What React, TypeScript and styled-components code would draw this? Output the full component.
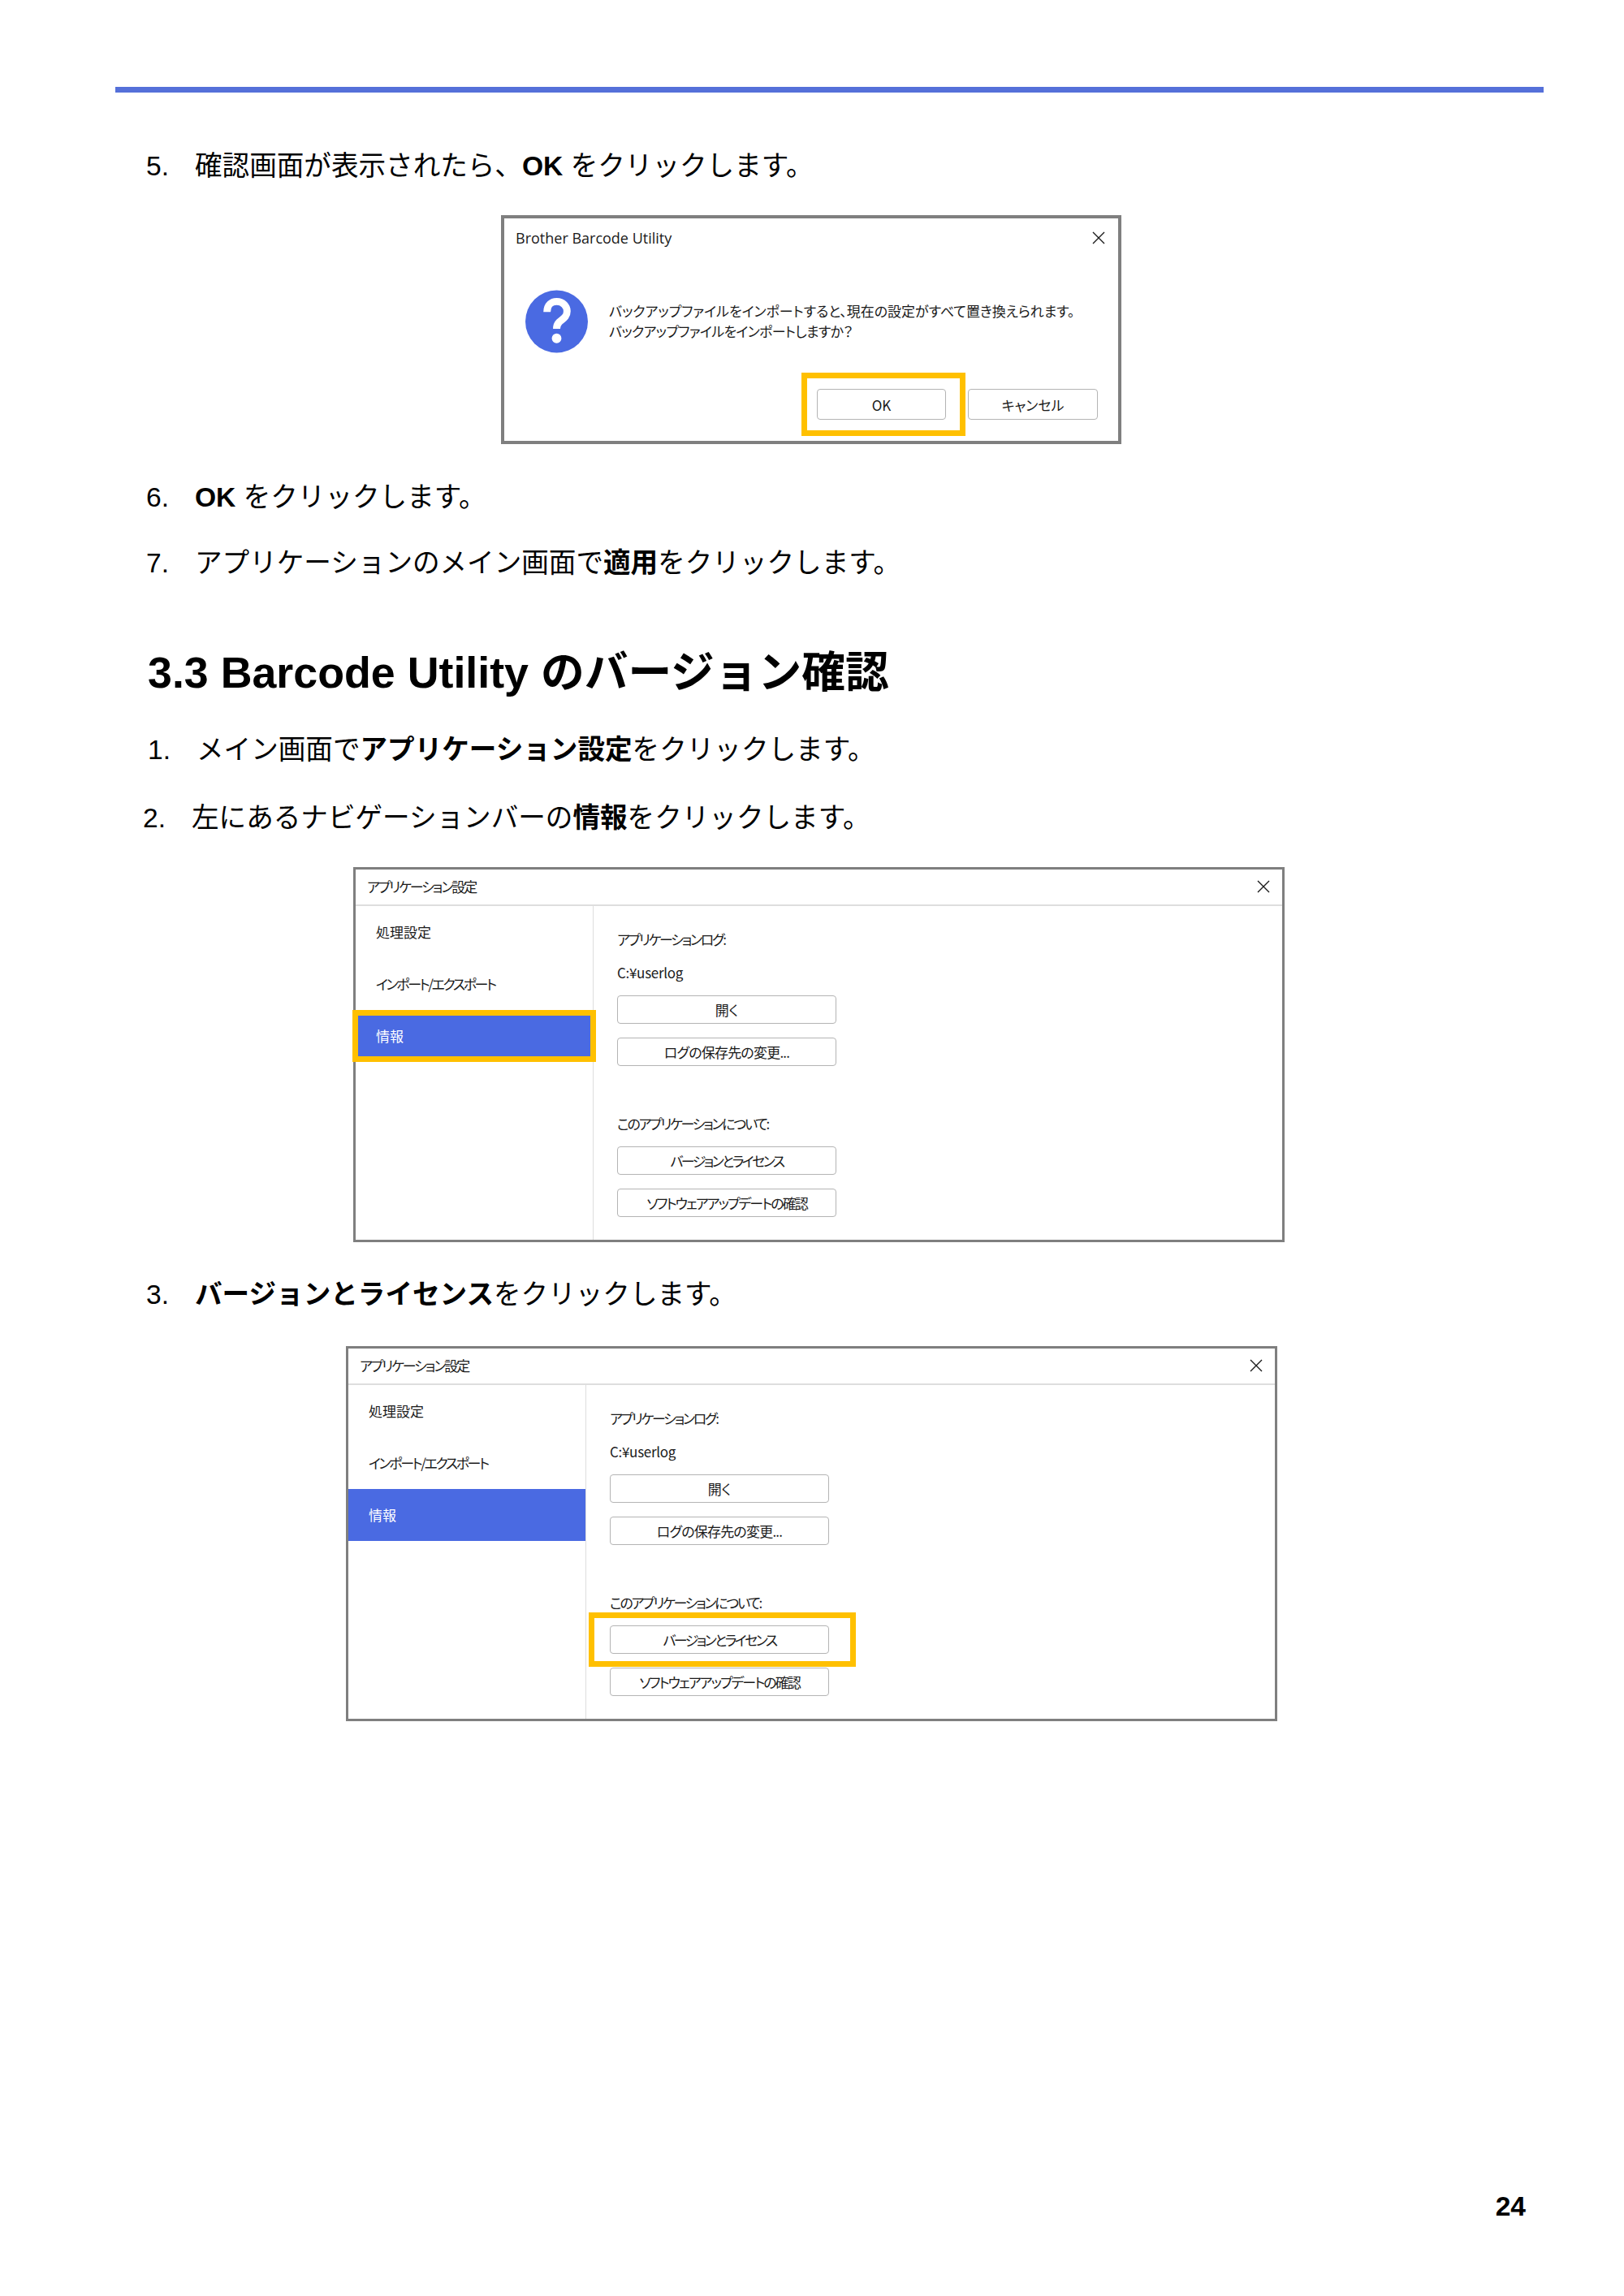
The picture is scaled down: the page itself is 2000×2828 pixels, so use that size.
import React from "react";
import styled, { createGlobalStyle } from "styled-components";

const Global = createGlobalStyle`
  html, body { margin: 0; padding: 0; background: #fff; }
  body { font-family: "Liberation Sans", "Noto Sans CJK JP", sans-serif; color: #000; }
`;

const Page = styled.div`
  width: 2000px;
  height: 2828px;
  display: flex;
  flex-direction: column;
  box-sizing: border-box;
  padding: 107px 0 90px;
  overflow: hidden;
`;

const TopBar = styled.div`
  height: 7px;
  width: 1759px;
  margin-left: 142px;
  background: #5570d9;
`;

const Step = styled.div<{ $left: number; $top: number }>`
  display: grid;
  grid-template-columns: 60px auto;
  margin-left: ${(p) => p.$left}px;
  margin-top: ${(p) => p.$top}px;
  font-size: 33.6px;
  line-height: 40px;
  white-space: nowrap;
`;

const Heading = styled.h2`
  margin: 84px 0 0 182px;
  font-size: 53.76px;
  line-height: 60px;
  font-weight: 700;
  white-space: nowrap;
`;

const Dialog = styled.div<{
  $left: number;
  $top: number;
  $width: number;
  $height: number;
  $border: number;
}>`
  box-sizing: border-box;
  margin-left: ${(p) => p.$left}px;
  margin-top: ${(p) => p.$top}px;
  width: ${(p) => p.$width}px;
  height: ${(p) => p.$height}px;
  border: ${(p) => p.$border}px solid #7f7f7f;
  background: #fff;
  display: flex;
  flex-direction: column;
  font-family: "Noto Sans CJK JP", "Open Sans", sans-serif;
  font-feature-settings: "palt";
  font-size: 17px;
  color: #1a1a1a;
`;

const ConfirmHeader = styled.div`
  display: flex;
  justify-content: space-between;
  align-items: center;
  height: 47px;
  padding: 0 16px 0 14px;
`;

const ConfirmTitle = styled.span`
  font-family: "Open Sans", sans-serif;
  font-size: 18px;
`;

const CloseIcon = () => (
  <svg width="16" height="16" viewBox="0 0 16 16" aria-hidden="true">
    <path d="M1 1 L15 15 M15 1 L1 15" stroke="#1a1a1a" strokeWidth="1.4" fill="none" />
  </svg>
);

const ConfirmBody = styled.div`
  display: flex;
  align-items: center;
  gap: 26px;
  padding: 41px 0 0 26px;
`;

const QuestionIcon = () => (
  <svg width="77" height="78" viewBox="0 0 78 78" aria-hidden="true">
    <circle cx="39" cy="39" r="39" fill="#4a6ae2" />
    <path
      d="M27 27 C27 18 33 14 39 14 C47 14 52 20 52 26 C52 34 46 36 42 40 C40 42 39 44 39 48"
      stroke="#fff"
      strokeWidth="9"
      fill="none"
    />
    <circle cx="39" cy="60" r="6" fill="#fff" />
  </svg>
);

const Message = styled.p`
  margin: 0 0 3px;
  font-size: 17px;
  line-height: 25px;
  white-space: nowrap;
`;

const MessageLine = styled.span<{ $track: number }>`
  display: block;
  letter-spacing: ${(p) => p.$track}px;
`;

const ConfirmActions = styled.div`
  display: flex;
  justify-content: flex-end;
  gap: 27px;
  padding: 44px 25px 0 0;
`;

const Button = styled.div<{ $width?: number; $height?: number; $top?: number; $track?: number }>`
  position: relative;
  box-sizing: border-box;
  width: ${(p) => p.$width ?? 270}px;
  height: ${(p) => p.$height ?? 35}px;
  margin-top: ${(p) => p.$top ?? 0}px;
  border: 1.5px solid #b4b4b4;
  border-radius: 4px;
  background: #fff;
  display: flex;
  align-items: center;
  justify-content: center;
  font-size: 17px;
  letter-spacing: ${(p) => p.$track ?? 0}px;
  white-space: nowrap;
`;

const Highlight = styled.div<{ $t: number; $r: number; $b: number; $l: number }>`
  position: absolute;
  top: ${(p) => p.$t}px;
  right: ${(p) => p.$r}px;
  bottom: ${(p) => p.$b}px;
  left: ${(p) => p.$l}px;
  border: 7.5px solid #ffc000;
  pointer-events: none;
`;

const SettingsHeader = styled.div`
  display: flex;
  justify-content: space-between;
  align-items: center;
  box-sizing: border-box;
  height: 45px;
  padding: 0 15px 2px 14px;
  border-bottom: 2px solid #dedede;
  flex-shrink: 0;
`;

const SettingsTitle = styled.span`
  letter-spacing: -2.1px;
`;

const SettingsBody = styled.div`
  display: flex;
  flex: 1;
  min-height: 0;
`;

const Sidebar = styled.nav`
  width: 293px;
  flex-shrink: 0;
  border-right: 1px solid #dedede;
  box-sizing: border-box;
`;

const NavItem = styled.div<{ $active?: boolean; $track?: number }>`
  position: relative;
  box-sizing: border-box;
  height: 64px;
  display: flex;
  align-items: center;
  padding: 0 0 2px 25px;
  background: ${(p) => (p.$active ? "#4a6ae2" : "transparent")};
  color: ${(p) => (p.$active ? "#fff" : "#1a1a1a")};
  letter-spacing: ${(p) => p.$track ?? 0}px;
  white-space: nowrap;
`;

const Panel = styled.div`
  padding: 29px 0 0 29px;
  display: flex;
  flex-direction: column;
  align-items: flex-start;
`;

const Label = styled.div<{ $top?: number; $track?: number }>`
  height: 24px;
  line-height: 24px;
  margin-top: ${(p) => p.$top ?? 0}px;
  letter-spacing: ${(p) => p.$track ?? 0}px;
  white-space: nowrap;
`;

const PageNumber = styled.div`
  margin-top: auto;
  align-self: flex-end;
  margin-right: 121px;
  font-size: 33.6px;
  line-height: 40px;
  font-weight: 700;
`;

type SettingsProps = {
  left: number;
  top: number;
  navHighlight?: boolean;
  buttonHighlight?: boolean;
};

const SettingsDialog = ({ left, top, navHighlight, buttonHighlight }: SettingsProps) => (
  <Dialog $left={left} $top={top} $width={1147} $height={462} $border={3}>
    <SettingsHeader>
      <SettingsTitle>アプリケーション設定</SettingsTitle>
      <CloseIcon />
    </SettingsHeader>
    <SettingsBody>
      <Sidebar>
        <NavItem>処理設定</NavItem>
        <NavItem $track={-2.4}>インポート/エクスポート</NavItem>
        <NavItem $active>
          情報
          {navHighlight && <Highlight $t={0} $r={-4} $b={0} $l={-4} />}
        </NavItem>
      </Sidebar>
      <Panel>
        <Label $track={-2.3}>アプリケーションログ:</Label>
        <Label $top={17} $track={-0.3}>
          C:¥userlog
        </Label>
        <Button $top={16}>開く</Button>
        <Button $top={17} $track={-0.8}>
          ログの保存先の変更...
        </Button>
        <Label $top={59} $track={-2.3}>
          このアプリケーションについて:
        </Label>
        <Button $top={16} $track={-2.6}>
          バージョンとライセンス
          {buttonHighlight && <Highlight $t={-17} $r={-34} $b={-17} $l={-27} />}
        </Button>
        <Button $top={17} $track={-2}>
          ソフトウェアアップデートの確認
        </Button>
      </Panel>
    </SettingsBody>
  </Dialog>
);

export default function App() {
  return (
    <Page>
      <Global />
      <TopBar />
      <Step $left={180} $top={71}>
        <span>5.</span>
        <span>
          確認画面が表示されたら、<b>OK</b> をクリックします。
        </span>
      </Step>
      <Dialog $left={617} $top={40} $width={764} $height={282} $border={4}>
        <ConfirmHeader>
          <ConfirmTitle>Brother Barcode Utility</ConfirmTitle>
          <CloseIcon />
        </ConfirmHeader>
        <ConfirmBody>
          <QuestionIcon />
          <Message>
            <MessageLine $track={-0.05}>
              バックアップファイルをインポートすると、現在の設定がすべて置き換えられます。
            </MessageLine>
            <MessageLine $track={-0.7}>バックアップファイルをインポートしますか？</MessageLine>
          </Message>
        </ConfirmBody>
        <ConfirmActions>
          <Button $width={159} $height={38}>
            OK
            <Highlight $t={-21} $r={-25} $b={-21} $l={-20} />
          </Button>
          <Button $width={160} $height={38}>
            キャンセル
          </Button>
        </ConfirmActions>
      </Dialog>
      <Step $left={180} $top={46}>
        <span>6.</span>
        <span>
          <b>OK</b> をクリックします。
        </span>
      </Step>
      <Step $left={180} $top={41}>
        <span>7.</span>
        <span>
          アプリケーションのメイン画面で<b>適用</b>をクリックします。
        </span>
      </Step>
      <Heading>3.3 Barcode Utility のバージョン確認</Heading>
      <Step $left={182} $top={46}>
        <span>1.</span>
        <span>
          メイン画面で<b>アプリケーション設定</b>をクリックします。
        </span>
      </Step>
      <Step $left={176} $top={44}>
        <span>2.</span>
        <span>
          左にあるナビゲーションバーの<b>情報</b>をクリックします。
        </span>
      </Step>
      <SettingsDialog left={435} top={40} navHighlight />
      <Step $left={180} $top={45}>
        <span>3.</span>
        <span>
          <b>バージョンとライセンス</b>をクリックします。
        </span>
      </Step>
      <SettingsDialog left={426} top={43} buttonHighlight />
      <PageNumber>24</PageNumber>
    </Page>
  );
}
